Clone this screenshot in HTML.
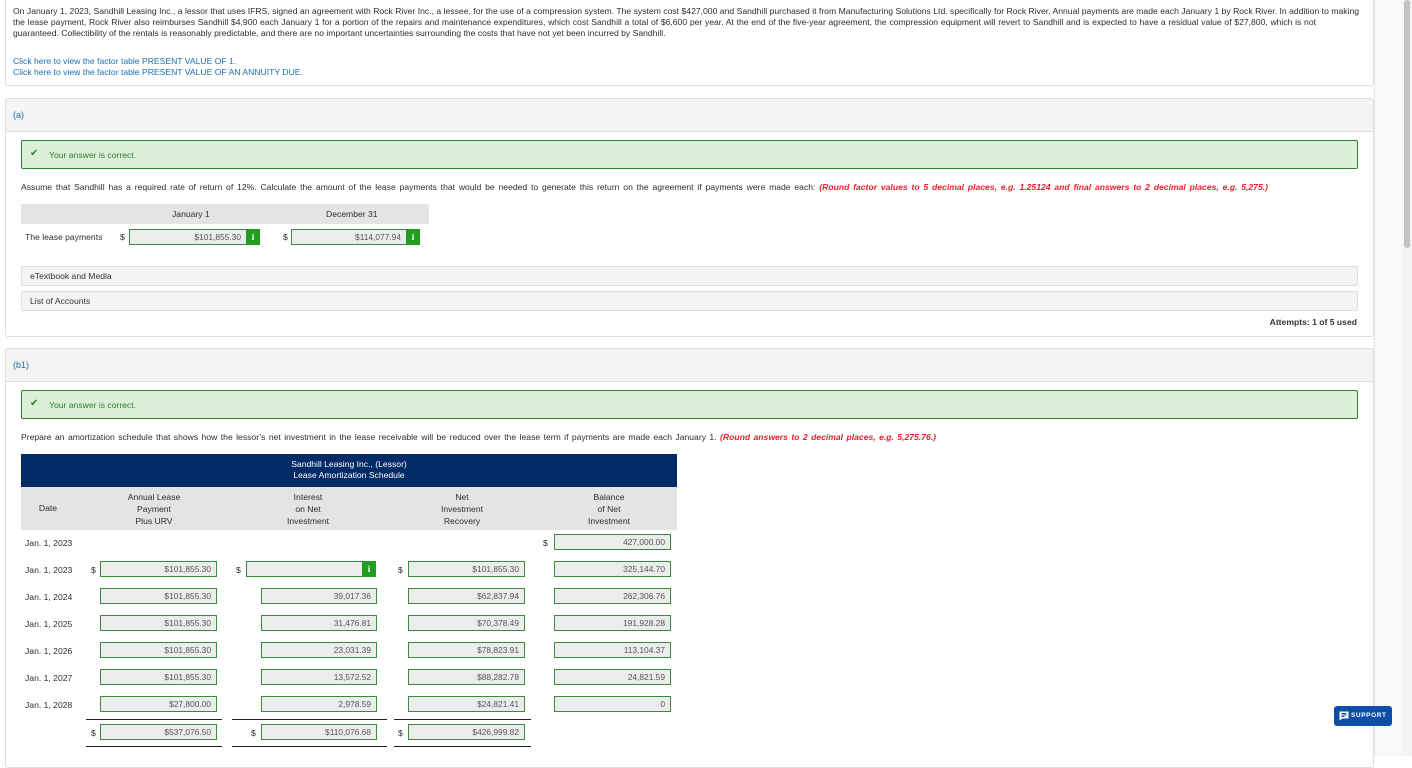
<!DOCTYPE html>
<html><head><meta charset="utf-8"><style>
*{margin:0;padding:0;box-sizing:border-box}
body{width:1412px;height:756px;overflow:hidden;background:#fff;font-family:"Liberation Sans",sans-serif;color:#2d2d2d;font-size:8.6px;position:relative}
.a{position:absolute;white-space:nowrap}
.card{position:absolute;left:5px;width:1369px;background:#fff;border:1px solid #ddd;border-radius:3px}
.hdr{position:absolute;left:5px;width:1369px;background:#f4f4f4;border:1px solid #ddd;border-radius:3px 3px 0 0}
.just{position:absolute;white-space:nowrap;text-align:justify;text-align-last:justify;overflow:hidden}
.link{color:#1a6fb0}
.green{position:absolute;left:21px;width:1337px;height:29px;background:#dbf0d6;border:1px solid #2e7d32;border-radius:2px;color:#2e7d32}
.red{color:#e8202a;font-weight:bold;font-style:italic}
.in{position:absolute;height:16px;background:#ececec;border:1px solid #3b8a3b;text-align:right;padding-right:5px;line-height:14px;color:#555;font-size:8.4px}
.ib{position:absolute;width:14px;height:16px;background:#1ea01e;color:#fff;font:bold 9px "Liberation Serif",serif;text-align:center;line-height:16px}
.gbox{position:absolute;left:21px;width:1337px;height:20px;background:#f4f4f4;border:1px solid #ddd;border-radius:2px;padding-left:8px;line-height:18px;color:#333}
.ln{position:absolute;height:1px;background:#222}
</style></head><body>

<div class="a" style="left:1374px;top:0;width:28px;height:756px;background:#f8f8f8;border-left:1px solid #e6e6e6"></div>
<div class="a" style="left:1402px;top:0;width:10px;height:756px;background:#f4f4f4"></div>
<div class="a" style="left:1404px;top:0;width:6px;height:248px;background:#c2c2c2;border-radius:3px"></div>

<div class="card" style="top:-4px;height:90px"></div>
<div class="just" style="left:13px;top:6px;width:1346px">On January 1, 2023, Sandhill Leasing Inc., a lessor that uses IFRS, signed an agreement with Rock River Inc., a lessee, for the use of a compression system. The system cost $427,000 and Sandhill purchased it from Manufacturing Solutions Ltd. specifically for Rock River. Annual payments are made each January 1 by Rock River. In addition to making</div>
<div class="just" style="left:13px;top:17px;width:1303px">the lease payment, Rock River also reimburses Sandhill $4,900 each January 1 for a portion of the repairs and maintenance expenditures, which cost Sandhill a total of $6,600 per year. At the end of the five-year agreement, the compression equipment will revert to Sandhill and is expected to have a residual value of $27,800, which is not</div>
<div class="a" style="left:13px;top:28px">guaranteed. Collectibility of the rentals is reasonably predictable, and there are no important uncertainties surrounding the costs that have not yet been incurred by Sandhill.</div>
<div class="a link" style="left:13px;top:56px">Click here to view the factor table PRESENT VALUE OF 1.</div>
<div class="a link" style="left:13px;top:67px">Click here to view the factor table PRESENT VALUE OF AN ANNUITY DUE.</div>

<div class="card" style="top:98px;height:239px"></div>
<div class="hdr" style="top:98px;height:34px"></div>
<div class="a link" style="left:13px;top:110px;font-size:9px">(a)</div>
<div class="green" style="top:140px"><span class="a" style="left:8px;top:7px;font-size:10px">&#10004;</span><span class="a" style="left:27px;top:9px">Your answer is correct.</span></div>
<div class="just" style="left:21px;top:182px;width:1247px">Assume that Sandhill has a required rate of return of 12%. Calculate the amount of the lease payments that would be needed to generate this return on the agreement if payments were made each: <span class="red">(Round factor values to 5 decimal places, e.g. 1.25124 and final answers to 2 decimal places, e.g. 5,275.)</span></div>
<div class="a" style="left:21px;top:204px;width:408px;height:20px;background:#e4e4e4"></div>
<div class="a" style="left:172px;top:209px">January 1</div>
<div class="a" style="left:326px;top:209px">December 31</div>
<div class="a" style="left:25px;top:232px">The lease payments</div>
<div class="a" style="left:120px;top:232px">$</div>
<div class="in" style="left:129px;top:229px;width:118px">$101,855.30</div><div class="ib" style="left:246px;top:229px">i</div>
<div class="a" style="left:283px;top:232px">$</div>
<div class="in" style="left:291px;top:229px;width:116px">$114,077.94</div><div class="ib" style="left:406px;top:229px">i</div>
<div class="gbox" style="top:266px">eTextbook and Media</div>
<div class="gbox" style="top:291px">List of Accounts</div>
<div class="a" style="right:55px;top:317px;font-weight:bold;color:#333">Attempts: 1 of 5 used</div>

<div class="card" style="top:348px;height:420px"></div>
<div class="hdr" style="top:348px;height:34px"></div>
<div class="a link" style="left:13px;top:360px;font-size:9px">(b1)</div>
<div class="green" style="top:390px"><span class="a" style="left:8px;top:7px;font-size:10px">&#10004;</span><span class="a" style="left:27px;top:9px">Your answer is correct.</span></div>
<div class="just" style="left:21px;top:432px;width:915px">Prepare an amortization schedule that shows how the lessor’s net investment in the lease receivable will be reduced over the lease term if payments are made each January 1. <span class="red">(Round answers to 2 decimal places, e.g. 5,275.76.)</span></div>

<div class="a" style="left:21px;top:454px;width:656px;height:33px;background:#002b66"></div>
<div class="a" style="left:21px;top:459px;width:656px;text-align:center;color:#fff;line-height:11px">Sandhill Leasing Inc., (Lessor)<br>Lease Amortization Schedule</div>
<div class="a" style="left:21px;top:487px;width:656px;height:43px;background:#e4e4e4"></div>
<div class="a" style="left:21px;top:503px;width:54px;text-align:center">Date</div>
<div class="a" style="left:100px;top:491px;width:108px;text-align:center;line-height:12px">Annual Lease<br>Payment<br>Plus URV</div>
<div class="a" style="left:253px;top:491px;width:110px;text-align:center;line-height:12px">Interest<br>on Net<br>Investment</div>
<div class="a" style="left:408px;top:491px;width:108px;text-align:center;line-height:12px">Net<br>Investment<br>Recovery</div>
<div class="a" style="left:554px;top:491px;width:110px;text-align:center;line-height:12px">Balance<br>of Net<br>Investment</div>

<div class="a" style="left:25px;top:538px">Jan. 1, 2023</div>
<div class="a" style="left:543px;top:538px">$</div>
<div class="in" style="left:554px;top:534px;width:117px">427,000.00</div>

<div class="a" style="left:25px;top:565px">Jan. 1, 2023</div>
<div class="a" style="left:91px;top:565px">$</div>
<div class="in" style="left:100px;top:561px;width:117px">$101,855.30</div>
<div class="a" style="left:236px;top:565px">$</div>
<div class="in" style="left:246px;top:561px;width:117px"></div><div class="ib" style="left:362px;top:561px">i</div>
<div class="a" style="left:398px;top:565px">$</div>
<div class="in" style="left:408px;top:561px;width:117px">$101,855.30</div>
<div class="in" style="left:554px;top:561px;width:117px">325,144.70</div>

<div class="a" style="left:25px;top:592px">Jan. 1, 2024</div>
<div class="in" style="left:100px;top:588px;width:117px">$101,855.30</div>
<div class="in" style="left:261px;top:588px;width:116px">39,017.36</div>
<div class="in" style="left:408px;top:588px;width:117px">$62,837.94</div>
<div class="in" style="left:554px;top:588px;width:117px">262,306.76</div>

<div class="a" style="left:25px;top:619px">Jan. 1, 2025</div>
<div class="in" style="left:100px;top:615px;width:117px">$101,855.30</div>
<div class="in" style="left:261px;top:615px;width:116px">31,476.81</div>
<div class="in" style="left:408px;top:615px;width:117px">$70,378.49</div>
<div class="in" style="left:554px;top:615px;width:117px">191,928.28</div>

<div class="a" style="left:25px;top:646px">Jan. 1, 2026</div>
<div class="in" style="left:100px;top:642px;width:117px">$101,855.30</div>
<div class="in" style="left:261px;top:642px;width:116px">23,031.39</div>
<div class="in" style="left:408px;top:642px;width:117px">$78,823.91</div>
<div class="in" style="left:554px;top:642px;width:117px">113,104.37</div>

<div class="a" style="left:25px;top:673px">Jan. 1, 2027</div>
<div class="in" style="left:100px;top:669px;width:117px">$101,855.30</div>
<div class="in" style="left:261px;top:669px;width:116px">13,572.52</div>
<div class="in" style="left:408px;top:669px;width:117px">$88,282.78</div>
<div class="in" style="left:554px;top:669px;width:117px">24,821.59</div>

<div class="a" style="left:25px;top:700px">Jan. 1, 2028</div>
<div class="in" style="left:100px;top:696px;width:117px">$27,800.00</div>
<div class="in" style="left:261px;top:696px;width:116px">2,978.59</div>
<div class="in" style="left:408px;top:696px;width:117px">$24,821.41</div>
<div class="in" style="left:554px;top:696px;width:117px">0</div>

<div class="ln" style="left:86px;top:719px;width:136px"></div>
<div class="ln" style="left:232px;top:719px;width:155px"></div>
<div class="ln" style="left:394px;top:719px;width:137px"></div>

<div class="a" style="left:91px;top:728px">$</div>
<div class="in" style="left:100px;top:724px;width:117px">$537,076.50</div>
<div class="a" style="left:251px;top:728px">$</div>
<div class="in" style="left:261px;top:724px;width:116px">$110,076.68</div>
<div class="a" style="left:398px;top:728px">$</div>
<div class="in" style="left:408px;top:724px;width:117px">$426,999.82</div>

<div class="ln" style="left:86px;top:746px;width:136px"></div>
<div class="ln" style="left:232px;top:746px;width:155px"></div>
<div class="ln" style="left:394px;top:746px;width:137px"></div>

<div class="a" style="left:1334px;top:706px;width:58px;height:20px;background:#0d4ea6;border-radius:3px;color:#fff;font-size:6.5px;font-weight:bold;letter-spacing:0.6px;line-height:20px;padding-left:17px">SUPPORT
<svg style="position:absolute;left:5px;top:5px" width="10" height="10" viewBox="0 0 10 10"><path d="M0.5 0.5h9v7h-6l-3 2z" fill="#fff"/><path d="M2.5 2.5h5M2.5 4h5M2.5 5.5h3" stroke="#0d4ea6" stroke-width="0.9"/></svg></div>

</body></html>
